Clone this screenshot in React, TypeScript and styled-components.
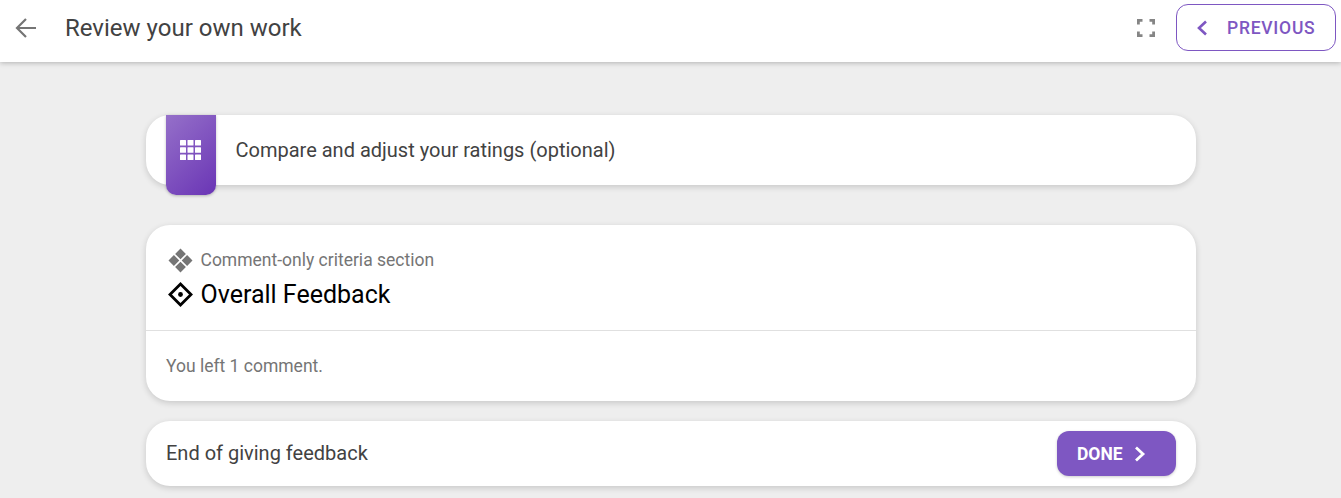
import styled, { createGlobalStyle } from 'styled-components';

const GlobalStyle = createGlobalStyle`
  html, body {
    margin: 0;
    padding: 0;
    height: 498px;
    overflow: hidden;
    background: #eeeeee;
    font-family: Roboto, "Liberation Sans", sans-serif;
  }
`;

const Page = styled.div`
  display: flex;
  flex-direction: column;
  height: 498px;
  overflow: hidden;
`;

const Header = styled.header`
  display: flex;
  align-items: center;
  flex: 0 0 auto;
  height: 62px;
  box-sizing: border-box;
  padding: 1px 5px 8px 15px;
  background: #fff;
  box-shadow: 0 1px 5px rgba(0, 0, 0, 0.25);
`;

const BackButton = styled.button`
  display: flex;
  width: 22px;
  height: 22px;
  padding: 0;
  border: 0;
  background: none;
  color: #757575;
`;

const PageTitle = styled.h1`
  flex: 1;
  margin: 0 0 0 28px;
  font-size: 24px;
  font-weight: 400;
  line-height: 32px;
  color: #424242;
`;

const ExpandButton = styled.button`
  display: flex;
  width: 20px;
  height: 20px;
  margin-right: 20px;
  padding: 0;
  border: 0;
  background: none;
  color: #858585;
`;

const PreviousButton = styled.button`
  display: flex;
  align-items: center;
  box-sizing: border-box;
  width: 160px;
  height: 47px;
  padding: 0 0 0 19px;
  border: 1px solid #7e57c2;
  border-radius: 12px;
  background: #fff;
  color: #7e57c2;
  font-family: inherit;
  font-size: 17.5px;
  font-weight: 500;
  letter-spacing: 0.75px;
  svg {
    margin-right: 19px;
  }
`;

const Content = styled.main`
  display: flex;
  flex-direction: column;
  width: 1050px;
  margin: 53px 0 0 146px;
`;

const Card = styled.section<{ $gap?: number }>`
  background: #fff;
  border-radius: 24px;
  box-shadow: 0 2px 6px rgba(0, 0, 0, 0.16);
  margin-bottom: ${(p) => p.$gap ?? 0}px;
`;

const CompareRow = styled(Card)`
  display: flex;
  height: 70px;
  padding-left: 20px;
`;

const Badge = styled.div`
  display: flex;
  align-items: center;
  justify-content: center;
  flex: 0 0 auto;
  width: 50px;
  height: 80px;
  padding-bottom: 10px;
  box-sizing: border-box;
  border-radius: 0 0 10px 10px;
  background: linear-gradient(135deg, #9570c9 0%, #6a35b5 100%);
  box-shadow: 0 1px 3px rgba(0, 0, 0, 0.25);
`;

const CompareLabel = styled.div`
  align-self: center;
  margin-left: 19.5px;
  font-size: 20px;
  line-height: 28px;
  color: #424242;
`;

const SectionHead = styled.div`
  padding: 22px 20px 20px 22px;
  border-bottom: 1px solid #e0e0e0;
`;

const Kicker = styled.div`
  display: flex;
  align-items: center;
  gap: 7.5px;
  height: 26px;
  font-size: 17.5px;
  color: #757575;
`;

const SectionTitle = styled.h2`
  display: flex;
  align-items: center;
  gap: 7.5px;
  height: 32px;
  margin: 5px 0 0;
  font-size: 25px;
  font-weight: 400;
  color: #000;
`;

const SectionBody = styled.div`
  padding: 24px 20px 24px;
  font-size: 17.5px;
  line-height: 22px;
  color: #757575;
`;

const FooterRow = styled(Card)`
  display: flex;
  align-items: center;
  justify-content: space-between;
  height: 65px;
  padding: 0 20px;
`;

const FooterText = styled.div`
  margin-bottom: 2px;
  font-size: 20px;
  color: #424242;
`;

const DoneButton = styled.button`
  display: flex;
  align-items: center;
  gap: 11px;
  box-sizing: border-box;
  width: 119px;
  height: 45px;
  padding: 0 0 0 20px;
  border: 0;
  border-radius: 12px;
  background: #7e57c2;
  box-shadow: 0 1px 3px rgba(0, 0, 0, 0.2);
  color: #fff;
  font-family: inherit;
  font-size: 17.5px;
  font-weight: 700;
`;

const ArrowLeft = () => (
  <svg width="22" height="22" viewBox="0 0 22 22" fill="none" stroke="currentColor" strokeWidth="2.2">
    <path d="M21 11H2M11 2l-9 9 9 9" />
  </svg>
);

const Corners = () => (
  <svg width="20" height="20" viewBox="0 0 20 20" fill="none" stroke="currentColor" strokeWidth="2.8">
    <path d="M2.4 6.5V2.4h4.1M13.5 2.4h4.1v4.1M17.6 13.5v4.1h-4.1M6.5 17.6H2.4v-4.1" />
  </svg>
);

const ChevronLeft = () => (
  <svg width="12" height="16" viewBox="0 0 12 16" fill="none" stroke="currentColor" strokeWidth="2.6">
    <path d="M10 1.5L3 8l7 6.5" />
  </svg>
);

const ChevronRight = () => (
  <svg width="12" height="18" viewBox="0 0 12 18" fill="none" stroke="currentColor" strokeWidth="2.8">
    <path d="M2 2.5L9 9l-7 6.5" />
  </svg>
);

const GridIcon = () => (
  <svg width="22" height="20" viewBox="0 0 22 20" fill="#fff">
    {[0, 7.5, 15].flatMap((x) =>
      [0, 7.2, 14.4].map((y) => <rect key={`${x}-${y}`} x={x} y={y} width="6" height="5.6" rx="0.5" />)
    )}
  </svg>
);

const FourDiamonds = () => (
  <svg width="25" height="25" viewBox="0 0 25 25" fill="#757575">
    <path d="M12.5 0.5l5.4 5.4-5.4 5.4-5.4-5.4zM5.9 7.1l5.4 5.4-5.4 5.4L0.5 12.5zM19.1 7.1l5.4 5.4-5.4 5.4-5.4-5.4zM12.5 13.7l5.4 5.4-5.4 5.4-5.4-5.4z" />
  </svg>
);

const DiamondDot = () => (
  <svg width="25" height="25" viewBox="0 0 25 25" fill="none">
    <path d="M12.5 2L23 12.5 12.5 23 2 12.5z" stroke="#000" strokeWidth="2.8" />
    <circle cx="12.5" cy="12.5" r="2.4" fill="#000" />
  </svg>
);

export default function App() {
  return (
    <Page>
      <GlobalStyle />
      <Header>
        <BackButton aria-label="Back">
          <ArrowLeft />
        </BackButton>
        <PageTitle>Review your own work</PageTitle>
        <ExpandButton aria-label="Fullscreen">
          <Corners />
        </ExpandButton>
        <PreviousButton>
          <ChevronLeft />
          PREVIOUS
        </PreviousButton>
      </Header>
      <Content>
        <CompareRow $gap={40}>
          <Badge>
            <GridIcon />
          </Badge>
          <CompareLabel>Compare and adjust your ratings (optional)</CompareLabel>
        </CompareRow>
        <Card $gap={20}>
          <SectionHead>
            <Kicker>
              <FourDiamonds />
              Comment-only criteria section
            </Kicker>
            <SectionTitle>
              <DiamondDot />
              Overall Feedback
            </SectionTitle>
          </SectionHead>
          <SectionBody>You left 1 comment.</SectionBody>
        </Card>
        <FooterRow>
          <FooterText>End of giving feedback</FooterText>
          <DoneButton>
            DONE
            <ChevronRight />
          </DoneButton>
        </FooterRow>
      </Content>
    </Page>
  );
}
